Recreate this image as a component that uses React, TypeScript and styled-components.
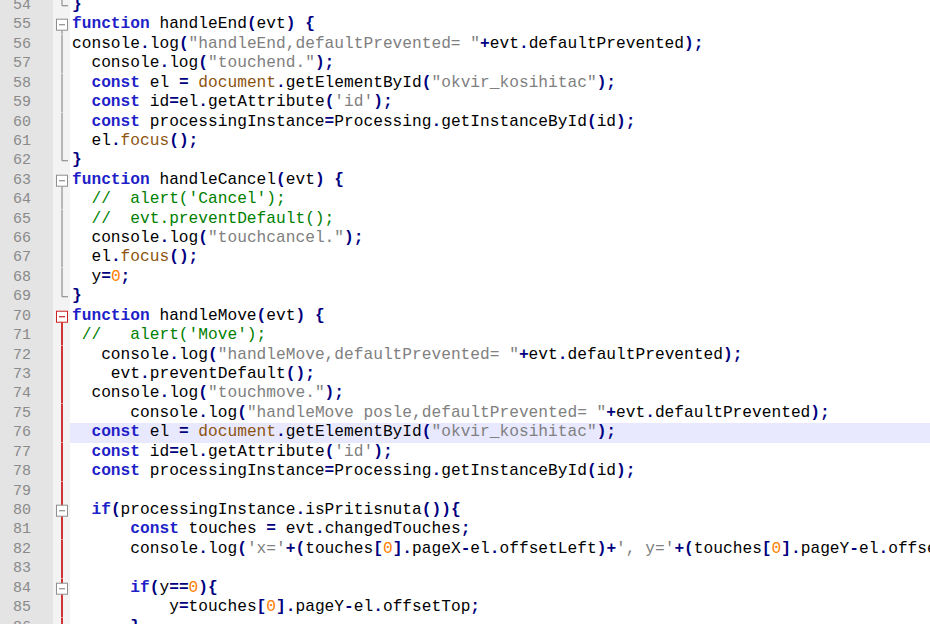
import React from "react";
import styled, { createGlobalStyle } from "styled-components";

const GlobalStyle = createGlobalStyle`
  html, body {
    margin: 0;
    padding: 0;
    background: #ffffff;
    overflow: hidden;
  }
  body {
    width: 930px;
    height: 624px;
  }
`;

const ROW_H = 19.43;

type TokenKind =
  | "plain"
  | "keyword"
  | "string"
  | "comment"
  | "number"
  | "operator"
  | "window";

const KEYWORDS = new Set(["function", "const", "if", "var", "let", "return", "else"]);
const WINDOW_WORDS = new Set(["document", "focus"]);

const colors: Record<TokenKind, string> = {
  plain: "#000000",
  keyword: "#1f1fc8",
  string: "#808080",
  comment: "#008000",
  number: "#ff8000",
  operator: "#000080",
  window: "#8d5410",
};

const Editor = styled.div`
  display: flex;
  flex-direction: column;
  margin-top: -4px;
  width: 930px;
`;

const Row = styled.div`
  display: grid;
  grid-template-columns: 53px 17px 1fr;
  height: ${ROW_H}px;
  align-items: stretch;
`;

const LineNo = styled.div`
  background: #e4e4e4;
  color: #8a8a8a;
  font-family: "Liberation Mono", "Courier New", monospace;
  font-size: 15px;
  line-height: ${ROW_H}px;
  text-align: right;
  padding-right: 22px;
`;

const FoldCell = styled.div`
  background: #f3f3f3;
  display: flex;
  align-items: stretch;
  justify-content: flex-start;
`;

const Code = styled.div<{ $current?: boolean }>`
  background: ${(p) => (p.$current ? "#e8e8ff" : "#ffffff")};
  padding-left: 2px;
  font-family: "Liberation Mono", "Courier New", monospace;
  font-size: 16.2px;
  line-height: ${ROW_H}px;
  white-space: pre;
  overflow: hidden;
  color: #000;
`;

const Tok = styled.span<{ $kind: TokenKind }>`
  color: ${(p) => colors[p.$kind]};
  font-weight: ${(p) => (p.$kind === "keyword" || p.$kind === "operator" ? 700 : 400)};
`;

type FoldKind = "none" | "end" | "open" | "mid" | "openRed" | "midRed" | "boxOnRed";

const GREY = "#8f8f8f";
const RED = "#cc1f1f";

const FoldMark: React.FC<{ kind: FoldKind }> = ({ kind }) => {
  const cy = ROW_H / 2;
  const x = 9;
  const boxTop = cy - 5.5;
  const boxBottom = cy + 5.5;
  const box = (c: string) => (
    <>
      <rect x={3.5} y={boxTop} width={11} height={11} fill="#ffffff" stroke={c} strokeWidth={1} />
      <line x1={6} y1={cy} x2={12} y2={cy} stroke={c} strokeWidth={1.2} />
    </>
  );
  return (
    <svg width={17} height={ROW_H} viewBox={`0 0 17 ${ROW_H}`}>
      {kind === "end" && (
        <>
          <line x1={x} y1={0} x2={x} y2={cy} stroke={GREY} strokeWidth={1.2} />
          <line x1={x} y1={cy} x2={15} y2={cy} stroke={GREY} strokeWidth={1.2} />
        </>
      )}
      {kind === "mid" && <line x1={x} y1={0} x2={x} y2={ROW_H} stroke={GREY} strokeWidth={1.2} />}
      {kind === "midRed" && <line x1={x} y1={0} x2={x} y2={ROW_H} stroke={RED} strokeWidth={1.8} />}
      {kind === "open" && (
        <>
          <line x1={x} y1={boxBottom} x2={x} y2={ROW_H} stroke={GREY} strokeWidth={1.2} />
          {box(GREY)}
        </>
      )}
      {kind === "openRed" && (
        <>
          <line x1={x} y1={boxBottom} x2={x} y2={ROW_H} stroke={RED} strokeWidth={1.8} />
          {box(RED)}
        </>
      )}
      {kind === "boxOnRed" && (
        <>
          <line x1={x} y1={0} x2={x} y2={ROW_H} stroke={RED} strokeWidth={1.8} />
          {box(GREY)}
        </>
      )}
    </svg>
  );
};

type Line = { n: number; text: string; fold: FoldKind; current?: boolean };

const lines: Line[] = [
  { n: 54, text: "}", fold: "end" },
  { n: 55, text: "function handleEnd(evt) {", fold: "open" },
  { n: 56, text: 'console.log("handleEnd,defaultPrevented= "+evt.defaultPrevented);', fold: "mid" },
  { n: 57, text: '  console.log("touchend.");', fold: "mid" },
  { n: 58, text: '  const el = document.getElementById("okvir_kosihitac");', fold: "mid" },
  { n: 59, text: "  const id=el.getAttribute('id');", fold: "mid" },
  { n: 60, text: "  const processingInstance=Processing.getInstanceById(id);", fold: "mid" },
  { n: 61, text: "  el.focus();", fold: "mid" },
  { n: 62, text: "}", fold: "end" },
  { n: 63, text: "function handleCancel(evt) {", fold: "open" },
  { n: 64, text: "  //  alert('Cancel');", fold: "mid" },
  { n: 65, text: "  //  evt.preventDefault();", fold: "mid" },
  { n: 66, text: '  console.log("touchcancel.");', fold: "mid" },
  { n: 67, text: "  el.focus();", fold: "mid" },
  { n: 68, text: "  y=0;", fold: "mid" },
  { n: 69, text: "}", fold: "end" },
  { n: 70, text: "function handleMove(evt) {", fold: "openRed" },
  { n: 71, text: " //   alert('Move');", fold: "midRed" },
  { n: 72, text: '   console.log("handleMove,defaultPrevented= "+evt.defaultPrevented);', fold: "midRed" },
  { n: 73, text: "    evt.preventDefault();", fold: "midRed" },
  { n: 74, text: '  console.log("touchmove.");', fold: "midRed" },
  { n: 75, text: '      console.log("handleMove posle,defaultPrevented= "+evt.defaultPrevented);', fold: "midRed" },
  { n: 76, text: '  const el = document.getElementById("okvir_kosihitac");', fold: "midRed", current: true },
  { n: 77, text: "  const id=el.getAttribute('id');", fold: "midRed" },
  { n: 78, text: "  const processingInstance=Processing.getInstanceById(id);", fold: "midRed" },
  { n: 79, text: "", fold: "midRed" },
  { n: 80, text: "  if(processingInstance.isPritisnuta()){", fold: "boxOnRed" },
  { n: 81, text: "      const touches = evt.changedTouches;", fold: "midRed" },
  { n: 82, text: "      console.log('x='+(touches[0].pageX-el.offsetLeft)+', y='+(touches[0].pageY-el.offsetTop));", fold: "midRed" },
  { n: 83, text: "", fold: "midRed" },
  { n: 84, text: "      if(y==0){", fold: "boxOnRed" },
  { n: 85, text: "          y=touches[0].pageY-el.offsetTop;", fold: "midRed" },
  { n: 86, text: "      }", fold: "midRed" },
];

const TOKEN_RE = /(\/\/.*$)|("[^"]*"|'[^']*')|(\b\d+\b)|([A-Za-z_$][\w$]*)|([(){}\[\];.,=+\-<>!]+)|(\s+)|(.)/g;

function tokenize(text: string): { kind: TokenKind; text: string }[] {
  const out: { kind: TokenKind; text: string }[] = [];
  let m: RegExpExecArray | null;
  TOKEN_RE.lastIndex = 0;
  while ((m = TOKEN_RE.exec(text)) !== null) {
    if (m[0].length === 0) break;
    if (m[1]) out.push({ kind: "comment", text: m[1] });
    else if (m[2]) out.push({ kind: "string", text: m[2] });
    else if (m[3]) out.push({ kind: "number", text: m[3] });
    else if (m[4]) {
      const w = m[4];
      out.push({
        kind: KEYWORDS.has(w) ? "keyword" : WINDOW_WORDS.has(w) ? "window" : "plain",
        text: w,
      });
    } else if (m[5]) out.push({ kind: "operator", text: m[5] });
    else out.push({ kind: "plain", text: m[0] });
  }
  return out;
}

export default function App() {
  return (
    <>
      <GlobalStyle />
      <Editor>
        {lines.map((l) => (
          <Row key={l.n}>
            <LineNo>{l.n}</LineNo>
            <FoldCell>
              <FoldMark kind={l.fold} />
            </FoldCell>
            <Code $current={l.current}>
              {tokenize(l.text).map((t, i) => (
                <Tok key={i} $kind={t.kind}>
                  {t.text}
                </Tok>
              ))}
            </Code>
          </Row>
        ))}
      </Editor>
    </>
  );
}
